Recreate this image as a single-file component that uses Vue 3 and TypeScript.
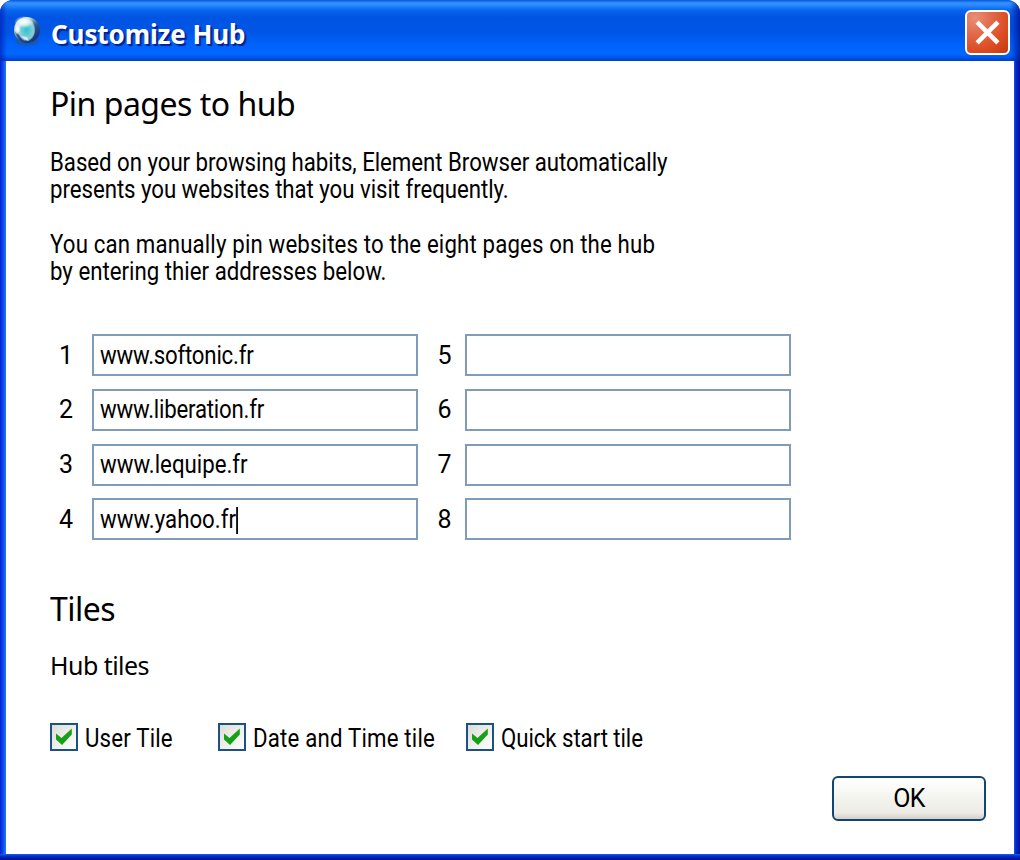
<script setup lang="ts">
import { ref } from "vue";

interface Pin {
  slot: number;
  address: string;
}

const pins = ref<Pin[]>([
  { slot: 1, address: "www.softonic.fr" },
  { slot: 2, address: "www.liberation.fr" },
  { slot: 3, address: "www.lequipe.fr" },
  { slot: 4, address: "www.yahoo.fr" },
  { slot: 5, address: "" },
  { slot: 6, address: "" },
  { slot: 7, address: "" },
  { slot: 8, address: "" },
]);

const focused = ref(4);

const tiles = ref([
  { id: "user", label: "User Tile", on: true },
  { id: "date", label: "Date and Time tile", on: true },
  { id: "quick", label: "Quick start tile", on: true },
]);
</script>

<template>
  <div class="window">
    <header class="titlebar">
      <svg class="globe" viewBox="0 0 30 32">
        <defs>
          <linearGradient id="globe-rim" x1="0.1" y1="0" x2="0.9" y2="0.9">
            <stop offset="0" stop-color="#eef6f4" />
            <stop offset="0.3" stop-color="#a9c9cf" />
            <stop offset="0.6" stop-color="#2a5a92" />
            <stop offset="1" stop-color="#0a2f7c" />
          </linearGradient>
          <radialGradient id="globe-core" cx="0.5" cy="0.5" r="0.5">
            <stop offset="0" stop-color="#2fc0d4" />
            <stop offset="0.55" stop-color="#6ccdd6" />
            <stop offset="0.85" stop-color="#b4e0e2" stop-opacity="0.8" />
            <stop offset="1" stop-color="#b4e0e2" stop-opacity="0" />
          </radialGradient>
          <radialGradient id="globe-shine">
            <stop offset="0" stop-color="#fff" />
            <stop offset="0.5" stop-color="#fff" stop-opacity="0.7" />
            <stop offset="1" stop-color="#fff" stop-opacity="0" />
          </radialGradient>
        </defs>
        <ellipse cx="15" cy="26" rx="12" ry="4.500" fill="#24569a" opacity="0.75" />
        <circle cx="15" cy="15" r="13" fill="url(#globe-rim)" />
        <path d="M3 17c2 4 4 8 9 10.500 5 1 11-1 14-6l-5 1-6 2-5-2z" fill="#123f86" opacity="0.7" />
        <ellipse cx="14.500" cy="15" rx="9" ry="11.500" fill="url(#globe-core)" />
        <ellipse cx="12" cy="7" rx="10" ry="6" fill="url(#globe-shine)" />
        <ellipse cx="5.500" cy="14" rx="3" ry="6" fill="url(#globe-shine)" />
        <path d="M9 21l3 3 5 2-2-4z" fill="#e4f3f3" opacity="0.8" />
      </svg>
      <h1 class="title">Customize Hub</h1>
      <button class="close" aria-label="Close">
        <svg viewBox="0 0 24 24">
          <path d="M2 2L22 22M22 2L2 22" stroke="#fff" stroke-width="4.300" />
        </svg>
      </button>
    </header>

    <main class="client">
      <h2 class="heading heading--pin">Pin pages to hub</h2>
      <p class="copy">
        <span class="narrow line line--habits">Based on your browsing habits, Element Browser automatically</span>
        <span class="narrow line line--visit">presents you websites that you visit frequently.</span>
      </p>
      <p class="copy">
        <span class="narrow line line--manual">You can manually pin websites to the eight pages on the hub</span>
        <span class="narrow line">by entering thier addresses below.</span>
      </p>

      <div class="pins">
        <div v-for="pin in pins" :key="pin.slot" class="pin">
          <span class="slot">{{ pin.slot }}</span>
          <div class="field" @click="focused = pin.slot">
            <span class="narrow address">
              {{ pin.address }}<i v-if="focused === pin.slot" class="caret" />
            </span>
          </div>
        </div>
      </div>

      <h2 class="heading heading--tiles">Tiles</h2>
      <h3 class="subheading">Hub tiles</h3>

      <div class="tiles">
        <div
          v-for="tile in tiles"
          :key="tile.id"
          class="tile"
          :class="`tile--${tile.id}`"
          @click="tile.on = !tile.on"
        >
          <span class="box">
            <svg v-if="tile.on" viewBox="0 0 18 18">
              <path d="M1 5.500L6.500 10L16.800 0.500V6.500L7 17L1 11.500Z" fill="#16a016" />
            </svg>
          </span>
          <span class="narrow tile-label">{{ tile.label }}</span>
        </div>
      </div>

      <footer class="actions">
        <button class="ok">OK</button>
      </footer>
    </main>
  </div>
</template>

<style>
body {
  background: #fff;
}
</style>

<style scoped>
.window {
  box-sizing: border-box;
  width: 1020px;
  height: 860px;
  display: flex;
  flex-direction: column;
  overflow: hidden;
  border-radius: 13px 13px 0 0;
  background:
    linear-gradient(180deg, transparent 854px, #1664f0 854px, #0030d0 856px, #001ca8 858px, #00129a 860px),
    linear-gradient(90deg, #0020d8 0, #0a4ce8 3px, #2a74f8 6px, #0855dd 7px, #0855dd 1013px, #1258f0 1014px, #0028c8 1016px, #00139a 1020px);
  color: #000;
  font-family: Roboto, "Liberation Sans", sans-serif;
  font-size: 25px;
}

/* the XP bitmap face is slimmer than Roboto */
.narrow {
  display: block;
  width: max-content;
  white-space: nowrap;
  transform: scaleX(0.89);
  transform-origin: 0 50%;
}

.titlebar {
  box-sizing: border-box;
  height: 61px;
  flex: none;
  display: flex;
  align-items: center;
  padding: 4px 10px 0 12px;
  background:
    linear-gradient(90deg, rgba(0, 20, 170, 0.6), transparent 7px, transparent 1010px, rgba(0, 20, 150, 0.8)),
    linear-gradient(180deg, #0855dd 0, #3593ff 3px, #2484fb 6px, #0866ee 10px, #0054e3 17px, #0055e6 32px, #0062fb 44px, #0067ff 54px, #0058ef 57px, #0040ca 61px);
}

.globe {
  width: 30px;
  height: 32px;
  margin-top: -4px;
}

.title {
  flex: 1;
  margin: 2px 0 0 9px;
  color: #fff;
  font: 700 26px/34px "Noto Sans", sans-serif;
  letter-spacing: -0.1px;
  text-shadow: 2px 2px 1px #08208c;
}

.close {
  box-sizing: border-box;
  width: 45px;
  height: 45px;
  padding: 8px;
  border: 2px solid #fff;
  border-radius: 6px;
  background: radial-gradient(circle at 20% 15%, #e88f76 0, #e0694a 35%, #dc4a20 70%, #c23a10 100%);
}
.close svg {
  display: block;
  width: 25px;
  height: 25px;
}

.client {
  box-sizing: border-box;
  flex: none;
  height: 793px;
  margin: 0 6px;
  padding: 23px 28px 0 44px;
  background: #fff;
}

.heading {
  margin: 0;
  font: 400 32px/40px "Noto Sans", sans-serif;
  letter-spacing: -0.500px;
}
.heading--tiles {
  margin-top: 49px;
}

.copy {
  margin: 25px 0 0;
  line-height: 27.300px;
}
.copy + .copy {
  margin-top: 27px;
}
.line--habits {
  letter-spacing: -0.050px;
}
.line--visit {
  letter-spacing: -0.060px;
}
.line--manual {
  letter-spacing: 0.160px;
}

.pins {
  display: grid;
  grid-template-rows: repeat(4, 42px);
  grid-auto-flow: column;
  justify-content: start;
  column-gap: 16px;
  row-gap: 12.700px;
  margin-top: 49px;
}
.pin {
  display: flex;
  align-items: center;
}
.slot {
  width: 32px;
  text-align: center;
}
.pin .field {
  margin-left: 10px;
}
.pin:nth-child(n + 5) .slot {
  width: 21px;
}
.field {
  box-sizing: border-box;
  display: flex;
  align-items: center;
  width: 326px;
  height: 42px;
  padding-left: 6px;
  border: 2px solid #7f9db9;
}
.address {
  letter-spacing: -0.250px;
}
.pin:nth-child(3) .address,
.pin:nth-child(4) .address {
  letter-spacing: 0;
}
.caret {
  display: inline-block;
  width: 2px;
  height: 27px;
  margin: 0 0 -6px;
  background: #000;
}

.subheading {
  margin: 19px 0 0;
  font: 400 25px/34px "Noto Sans", sans-serif;
  letter-spacing: -0.550px;
}

.tiles {
  display: flex;
  margin-top: 39px;
}
.tile {
  display: flex;
  align-items: center;
  white-space: nowrap;
}
.tile--user {
  width: 168px;
}
.tile--date {
  width: 248px;
}
.tile-label {
  padding-top: 3px;
}
.tile--user .tile-label,
.tile--date .tile-label {
  letter-spacing: 0.200px;
}
.tile--quick .tile-label {
  letter-spacing: -0.080px;
}
.box {
  box-sizing: border-box;
  display: flex;
  flex: none;
  align-items: center;
  justify-content: center;
  width: 28px;
  height: 28px;
  margin-right: 7px;
  border: 2px solid #1c5180;
  background: linear-gradient(135deg, #dcdcd7, #fff);
}
.box svg {
  width: 18px;
  height: 18px;
}

.actions {
  display: flex;
  justify-content: flex-end;
  margin-top: 23px;
}
.ok {
  box-sizing: border-box;
  width: 154px;
  height: 45px;
  padding: 0;
  border: 2px solid #114674;
  border-radius: 6px;
  background: linear-gradient(180deg, #fff 0, #f5f5f0 45%, #ecebe5 85%, #d6d0c5 100%);
  color: #000;
  font: inherit;
  letter-spacing: -0.800px;
}
</style>
